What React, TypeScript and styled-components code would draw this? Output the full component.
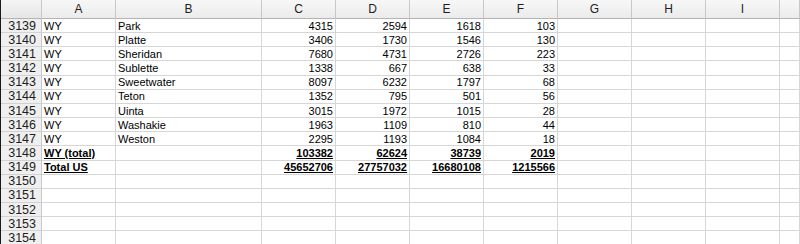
import styled, { createGlobalStyle } from 'styled-components'

type Row = {
  n: number
  state?: string
  county?: string
  values?: number[]
  total?: boolean
}

const rows: Row[] = [
  { n: 3139, state: 'WY', county: 'Park', values: [4315, 2594, 1618, 103] },
  { n: 3140, state: 'WY', county: 'Platte', values: [3406, 1730, 1546, 130] },
  { n: 3141, state: 'WY', county: 'Sheridan', values: [7680, 4731, 2726, 223] },
  { n: 3142, state: 'WY', county: 'Sublette', values: [1338, 667, 638, 33] },
  { n: 3143, state: 'WY', county: 'Sweetwater', values: [8097, 6232, 1797, 68] },
  { n: 3144, state: 'WY', county: 'Teton', values: [1352, 795, 501, 56] },
  { n: 3145, state: 'WY', county: 'Uinta', values: [3015, 1972, 1015, 28] },
  { n: 3146, state: 'WY', county: 'Washakie', values: [1963, 1109, 810, 44] },
  { n: 3147, state: 'WY', county: 'Weston', values: [2295, 1193, 1084, 18] },
  { n: 3148, state: 'WY (total)', values: [103382, 62624, 38739, 2019], total: true },
  { n: 3149, state: 'Total US', values: [45652706, 27757032, 16680108, 1215566], total: true },
  { n: 3150 },
  { n: 3151 },
  { n: 3152 },
  { n: 3153 },
  { n: 3154 },
]

const columns = ['A', 'B', 'C', 'D', 'E', 'F', 'G', 'H', 'I', '']

const GlobalStyle = createGlobalStyle`
  html, body {
    margin: 0;
    padding: 0;
    background: #fff;
    overflow: hidden;
  }
`

const App = () => {
  return (
    <>
      <GlobalStyle />
      <Sheet>
        <Corner />
        {columns.map((c, i) => (
          <ColHead key={i}>{c}</ColHead>
        ))}
        {rows.map((r) => (
          <RowCells key={r.n} row={r} />
        ))}
      </Sheet>
    </>
  )
}

const RowCells = ({ row }: { row: Row }) => {
  const vals = row.values ?? []
  return (
    <>
      <RowHead>{row.n}</RowHead>
      <Cell $bold={row.total}>{row.state}</Cell>
      <Cell>{row.county}</Cell>
      {[0, 1, 2, 3].map((i) => (
        <Cell key={i} $num $bold={row.total}>
          {vals[i]}
        </Cell>
      ))}
      <Cell />
      <Cell />
      <Cell />
      <Cell />
    </>
  )
}

const Sheet = styled.div`
  display: grid;
  grid-template-columns: 41px 74px 146px repeat(7, 74px) 1fr;
  grid-template-rows: 19px;
  grid-auto-rows: 14.17px;
  width: 800px;
  height: 244px;
  overflow: hidden;
  font-family: 'Liberation Sans', Arial, sans-serif;
  border-left: 1px solid #1a1a1a;
  box-sizing: border-box;
`

const Corner = styled.div`
  background: linear-gradient(#f4f4f4, #e6e6e6);
  border-right: 1px solid #c8c8c8;
  border-bottom: 1px solid #b4b4b4;
`

const ColHead = styled.div`
  display: flex;
  align-items: center;
  justify-content: center;
  font-size: 12px;
  color: #1e1e1e;
  background: linear-gradient(#f7f7f7, #ebebeb);
  border-right: 1px solid #c8c8c8;
  border-bottom: 1px solid #b4b4b4;
`

const RowHead = styled.div`
  display: flex;
  align-items: center;
  justify-content: flex-end;
  padding-right: 5px;
  font-size: 12.5px;
  color: #1e1e1e;
  background: #efefef;
  border-right: 1px solid #c8c8c8;
  border-bottom: 1px solid #d2d2d2;
`

const Cell = styled.div<{ $num?: boolean; $bold?: boolean }>`
  display: flex;
  align-items: center;
  justify-content: ${(p) => (p.$num ? 'flex-end' : 'flex-start')};
  padding: 0 2px;
  font-size: 11px;
  color: #000;
  font-weight: ${(p) => (p.$bold ? 700 : 400)};
  text-decoration: ${(p) => (p.$bold ? 'underline' : 'none')};
  white-space: nowrap;
  overflow: hidden;
  border-right: 1px solid #d6d6d6;
  border-bottom: 1px solid #d6d6d6;
`

export default App
